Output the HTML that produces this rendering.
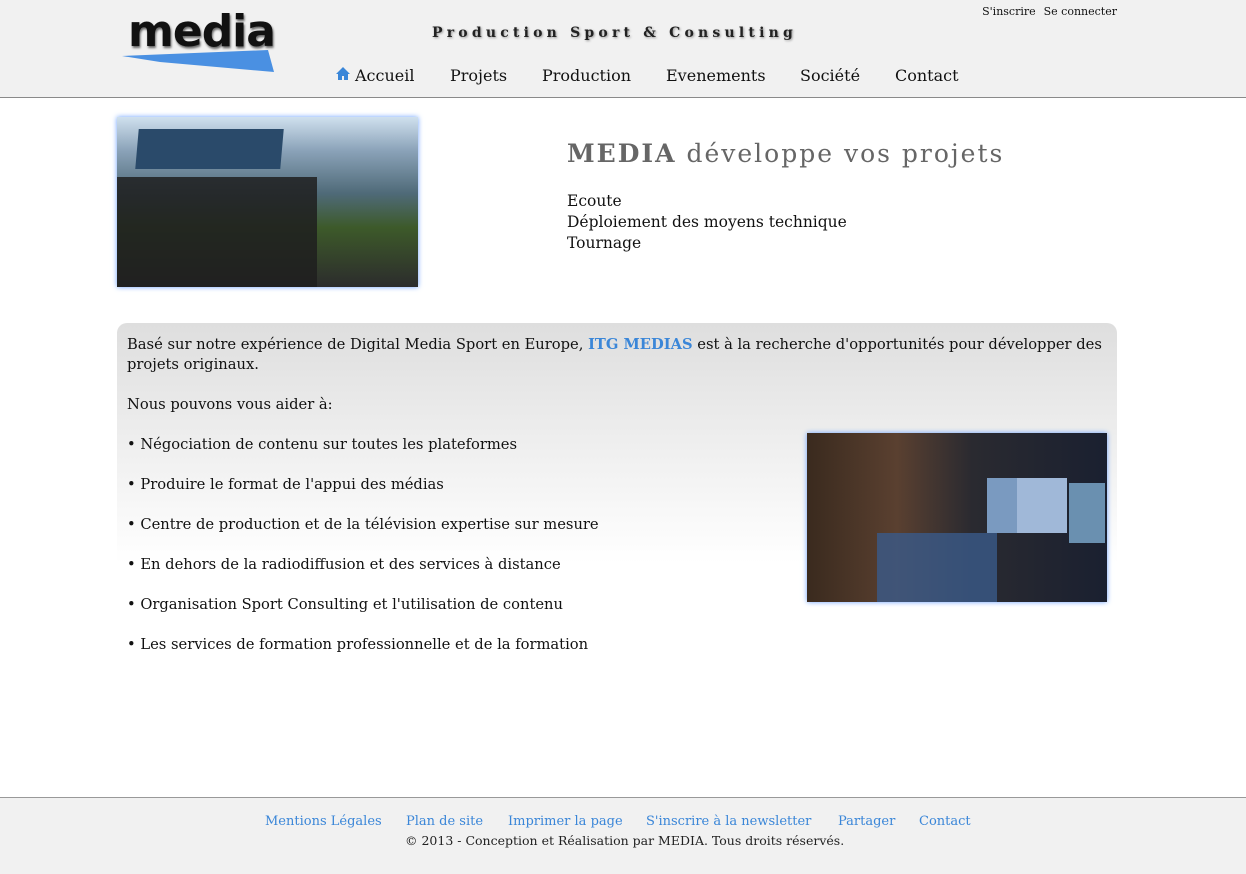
<!DOCTYPE html>
<html><head><meta charset="utf-8"><style>
*{margin:0;padding:0;box-sizing:border-box}
body{width:1246px;height:874px;background:#fff;font-family:"DejaVu Serif","Liberation Serif",serif;color:#111;position:relative;overflow:hidden}
.hdr{position:absolute;left:0;top:0;width:1246px;height:98px;background:#f1f1f1;border-bottom:1px solid #8a8a8a}
.top{position:absolute;right:129px;top:5px;font-size:11px}
.top span{margin-left:8px}
.tag{position:absolute;left:432px;top:25px;font-size:14px;font-weight:bold;letter-spacing:4.2px;color:#222;text-shadow:1px 1px 2px #999}
.nav{position:absolute;top:66px;font-size:16px;color:#111}
.logo{position:absolute;left:120px;top:14px}
.ftr{position:absolute;left:0;top:797px;width:1246px;height:77px;background:#f1f1f1;border-top:1px solid #999}
.fl{position:absolute;top:814px;font-size:13px;color:#3a86d8}
.box{position:absolute;left:117px;top:323px;width:1000px;height:350px;border-radius:10px;background:linear-gradient(#dedede,#fff 240px)}
.t{position:absolute;font-size:14.7px;left:127px}
</style></head><body>
<div class="hdr"></div>
<div class="top"><span>S'inscrire</span><span>Se connecter</span></div>
<div class="logo">
<svg width="160" height="60"><polygon points="2,42 148,36 154,58 40,48" fill="#4a90e2"/></svg>
<div style="position:absolute;left:8px;top:-8px;font-family:'DejaVu Sans',sans-serif;font-weight:bold;font-size:44px;letter-spacing:-1px;color:#111;text-shadow:1px 2px 2px #666">media</div>
</div>
<div class="tag">Production Sport &amp; Consulting</div>
<svg style="position:absolute;left:336px;top:67px" width="14" height="13"><path d="M7 0 L0 7 H2 V13 H6 V9 H8 V13 H12 V7 H14 Z" fill="#3a86d8"/></svg>
<div class="nav" style="left:355px">Accueil</div>
<div class="nav" style="left:450px">Projets</div>
<div class="nav" style="left:542px">Production</div>
<div class="nav" style="left:666px">Evenements</div>
<div class="nav" style="left:800px">Société</div>
<div class="nav" style="left:895px">Contact</div>

<div style="position:absolute;left:117px;top:117px;width:301px;height:170px;box-shadow:0 0 5px #6aa0ff;background:linear-gradient(180deg,#cfe0ee 0,#8aa2b8 20%,#4f6a78 45%,#3d5a2a 65%,#2c2c2c 100%)">
<div style="position:absolute;left:20px;top:12px;width:145px;height:40px;background:#2a4a6a;transform:skew(-5deg)"></div>
<div style="position:absolute;left:0;top:60px;width:200px;height:110px;background:#1e1e1e;opacity:.85"></div>
</div>
<div style="position:absolute;left:567px;top:139px;font-size:25px;letter-spacing:2px;color:#666"><b>MEDIA</b> développe vos projets</div>
<div style="position:absolute;left:567px;top:191px;font-size:15.5px;line-height:21px">Ecoute<br>Déploiement des moyens technique<br>Tournage</div>

<div class="box"></div>
<div class="t" style="top:335px;width:980px;line-height:20px">Basé sur notre expérience de Digital Media Sport en Europe, <b style="color:#3a86d8">ITG MEDIAS</b> est à la recherche d'opportunités pour développer des projets originaux.</div>
<div class="t" style="top:396px">Nous pouvons vous aider à:</div>
<div class="t" style="top:436px">• Négociation de contenu sur toutes les plateformes</div>
<div class="t" style="top:476px">• Produire le format de l'appui des médias</div>
<div class="t" style="top:516px">• Centre de production et de la télévision expertise sur mesure</div>
<div class="t" style="top:556px">• En dehors de la radiodiffusion et des services à distance</div>
<div class="t" style="top:596px">• Organisation Sport Consulting et l'utilisation de contenu</div>
<div class="t" style="top:636px">• Les services de formation professionnelle et de la formation</div>
<div style="position:absolute;left:807px;top:433px;width:300px;height:169px;box-shadow:0 0 5px #6aa0ff;background:linear-gradient(90deg,#3a2a1e 0,#5a4030 30%,#2a2a30 55%,#1a2030 100%)">
<div style="position:absolute;left:180px;top:45px;width:50px;height:55px;background:#7a9ac0"></div>
<div style="position:absolute;left:210px;top:45px;width:50px;height:55px;background:#a0b8d8"></div>
<div style="position:absolute;left:262px;top:50px;width:36px;height:60px;background:#6a90b0"></div>
<div style="position:absolute;left:70px;top:100px;width:120px;height:69px;background:#3a5a8a;opacity:.8"></div>
</div>

<div class="ftr"></div>
<div class="fl" style="left:265px">Mentions Légales</div>
<div class="fl" style="left:406px">Plan de site</div>
<div class="fl" style="left:508px">Imprimer la page</div>
<div class="fl" style="left:646px">S'inscrire à la newsletter</div>
<div class="fl" style="left:838px">Partager</div>
<div class="fl" style="left:919px">Contact</div>
<div style="position:absolute;left:405px;top:833px;font-size:12.5px;color:#222">© 2013 - Conception et Réalisation par MEDIA. Tous droits réservés.</div>
</body></html>
